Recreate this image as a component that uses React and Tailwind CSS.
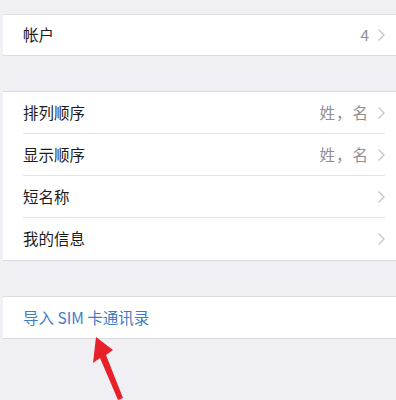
import React from 'react'

function Chevron() {
  return (
    <svg width="7" height="12" viewBox="0 0 7 12" className="ml-[9px] shrink-0">
      <path d="M1 1l5 5-5 5" fill="none" stroke="#c4c4c9" strokeWidth="1.3" strokeLinecap="round" strokeLinejoin="round" />
    </svg>
  )
}

function Row({ label, value, last }) {
  return (
    <div className="flex h-[42px] items-center pl-[20px] pr-[11px]">
      <div className={`flex h-full flex-1 items-center ${last ? '' : 'border-b border-[#e3e3e7]'}`}>
        <span className="flex-1 text-[15.5px] text-[#1c1c1e]">{label}</span>
        {value && <span className="text-[15.5px] tracking-[1px] text-[#8e8e93]">{value}</span>}
        <Chevron />
      </div>
    </div>
  )
}

export default function App() {
  const rows = [
    { label: '排列顺序', value: '姓，名' },
    { label: '显示顺序', value: '姓，名' },
    { label: '短名称' },
    { label: '我的信息' },
  ]

  return (
    <div
      className="relative min-h-[400px] overflow-hidden bg-[#efeff4] pt-[14px] pl-[3px]"
      style={{ fontFamily: '"Noto Sans CJK SC", "Noto Sans", sans-serif' }}
    >
      <div className="border-y border-[#dcdce0] bg-white">
        <div className="flex h-[40px] items-center pl-[20px] pr-[11px]">
          <span className="flex-1 text-[15.5px] text-[#1c1c1e]">帐户</span>
          <span className="text-[15.5px] text-[#8e8e93]">4</span>
          <Chevron />
        </div>
      </div>

      <div className="mt-[35px] border-y border-[#dcdce0] bg-white">
        {rows.map((r, i) => (
          <Row key={r.label} label={r.label} value={r.value} last={i === rows.length - 1} />
        ))}
      </div>

      <div className="mt-[35px] border-y border-[#dcdce0] bg-white">
        <div className="flex h-[41px] items-center pl-[20px]">
          <span className="text-[15.5px] text-[#3f7cc4]">导入 SIM 卡通讯录</span>
        </div>
      </div>

      {/* red annotation arrow */}
      <svg className="absolute left-[88px] top-[334px]" width="40" height="66" viewBox="0 0 40 66">
        <path d="M8 3 L5 29 L12 24 L30 66 L35 64 L18 21 L25 16 Z" fill="#e8202a" />
      </svg>
    </div>
  )
}
